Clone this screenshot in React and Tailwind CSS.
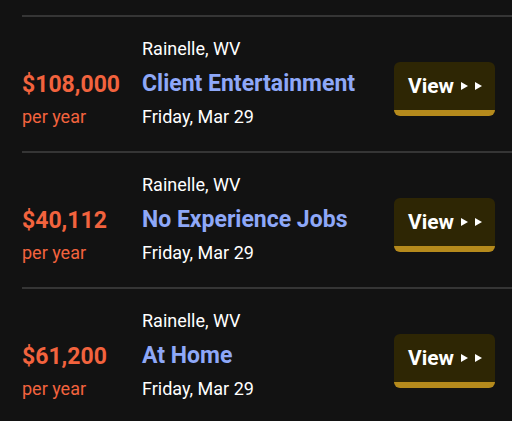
import React from "react";

const jobs = [
  { pay: "$108,000", title: "Client Entertainment" },
  { pay: "$40,112", title: "No Experience Jobs" },
  { pay: "$61,200", title: "At Home" },
];

function Arrow() {
  return (
    <svg className="block shrink-0 w-[7px] h-[8px]" viewBox="0 0 7 8">
      <path d="M0 0 L7 4 L0 8 Z" fill="#ffffff" />
    </svg>
  );
}

function JobRow({ job }) {
  return (
    <div className="ml-[22px] border-t-[2px] border-[#353535] flex items-start pt-[18px] pb-[20px] pr-[17px]">
      <div className="w-[120px] mt-[34px] flex flex-col">
        <span className="text-[23px] leading-[32px] font-bold text-[#f2633e]">{job.pay}</span>
        <span className="text-[18px] leading-[28px] mt-[2px] text-[#f2633e]">per year</span>
      </div>
      <div className="flex-1 flex flex-col">
        <span className="text-[18px] leading-[28px] text-white">Rainelle, WV</span>
        <span className="text-[23px] leading-[32px] mt-[5px] font-bold text-[#8ea8f8]">{job.title}</span>
        <span className="text-[18px] leading-[28px] mt-[3px] text-white">Friday, Mar 29</span>
      </div>
      <button className="mt-[27px] w-[101px] h-[54px] rounded-[6px] bg-[#2e2604] border-b-[6px] border-[#b58a1c] flex items-center justify-center gap-[7px] pl-[1px]">
        <span className="text-[21px] leading-[24px] font-bold text-white">View</span>
        <Arrow />
        <Arrow />
      </button>
    </div>
  );
}

export default function App() {
  return (
    <div
      className="w-[512px] h-[421px] overflow-hidden bg-[#121212] pt-[15px]"
      style={{ fontFamily: "Roboto, 'Liberation Sans', sans-serif" }}
    >
      {jobs.map((job) => (
        <JobRow key={job.pay} job={job} />
      ))}
    </div>
  );
}
